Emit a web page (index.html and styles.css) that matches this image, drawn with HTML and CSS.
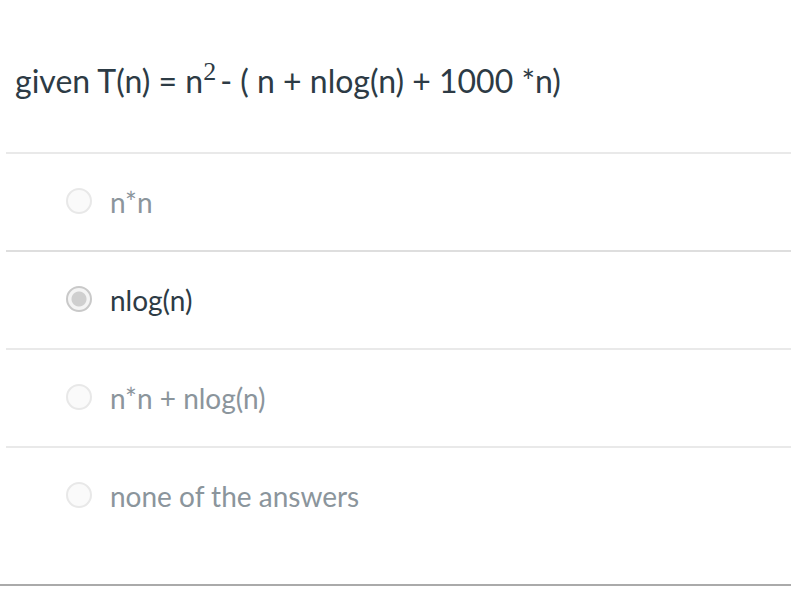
FILE: index.html
```html
<!DOCTYPE html>
<html>
<head>
<meta charset="utf-8">
<link rel="stylesheet" href="styles.css">
</head>
<body>
<div class="question">
  <div class="q-text">given T(n) = n<span class="sq">2</span>- ( n + nlog(n) + 1000 *n)</div>
  <div class="answers">
    <div class="answer"><span class="radio"></span><span class="label">n*n</span></div>
    <div class="answer selected"><span class="radio"></span><span class="label">nlog(n)</span></div>
    <div class="answer"><span class="radio"></span><span class="label">n*n + nlog(n)</span></div>
    <div class="answer"><span class="radio"></span><span class="label">none of the answers</span></div>
  </div>
  <div class="footer"></div>
</div>
</body>
</html>
```

FILE: styles.css
```css
html, body {
  margin: 0;
  padding: 0;
  background: #ffffff;
}
body {
  font-family: Lato, "Open Sans", sans-serif;
  color: #2d3b45;
}
.question {
  width: 791px;
}
.q-text {
  box-sizing: border-box;
  height: 152px;
  padding: 62px 0 0 15px;
  font-size: 32px;
  line-height: 38px;
  color: #2d3b45;
}
.sq {
  font-family: "Liberation Serif", serif;
  font-size: 26px;
  vertical-align: 13px;
  line-height: 0;
  margin-right: 4px;
}
.answers {
  padding-left: 6px;
}
.answer {
  border-top: 2px solid #e9e9e9;
  height: 96px;
  display: flex;
  align-items: center;
  padding-left: 60px;
}
.answer:nth-child(2) {
  border-top-color: #dedede;
}
.radio {
  width: 22px;
  height: 22px;
  border-radius: 50%;
  border: 2px solid #e8e8e8;
  background: #fafafa;
  margin-bottom: 3px;
  flex: none;
}
.selected .radio {
  border-color: #c9c9c9;
  background: radial-gradient(circle, #cfcfcf 0 7px, #f4f4f4 8px);
}
.label {
  margin-left: 18px;
  font-size: 28px;
  line-height: 34px;
  color: #8b959c;
}
.selected .label {
  color: #2d3b45;
}
.footer {
  margin-top: 40px;
  border-top: 2px solid #aaaaaa;
}
```
